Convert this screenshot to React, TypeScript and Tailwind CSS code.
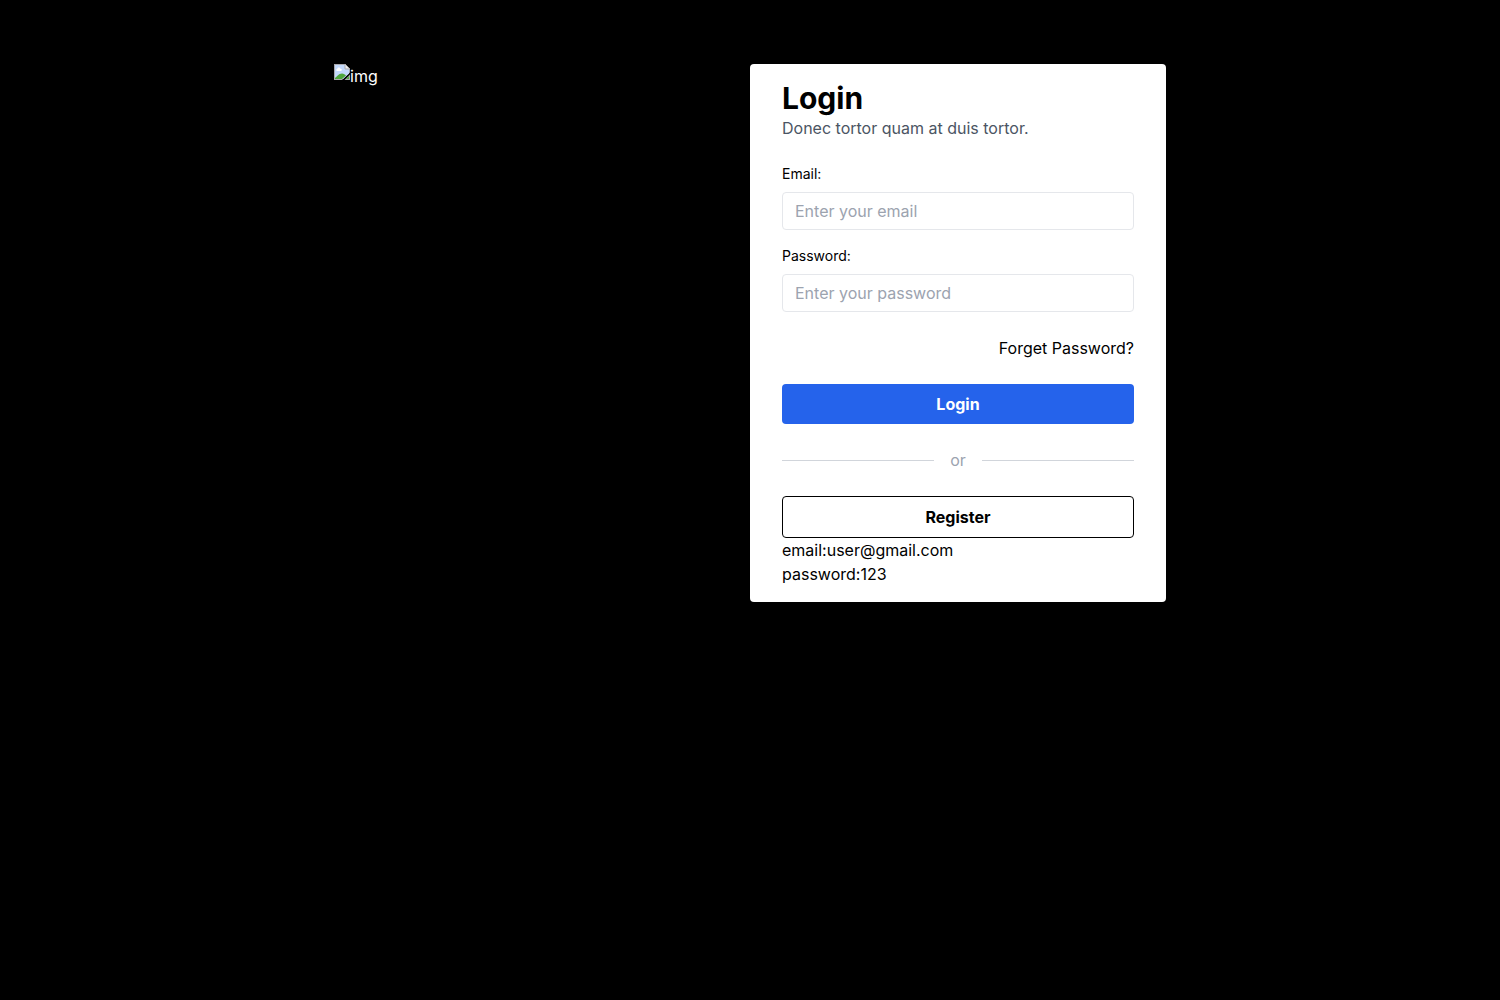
export default function App() {
  return (
    <div className="min-h-screen bg-black font-['Inter',sans-serif] text-base text-black">
      <main className="mx-auto grid max-w-[832px] items-start py-16 sm:grid-cols-2">
        <div className="flex items-start text-white">
          <svg role="img" aria-label="Missing image" width="16" height="16" viewBox="0 0 16 16" className="shrink-0">
            <path d="M0 0h11l5 5v3.500L8 16H0z" fill="#a9a9ad" />
            <path d="M1 1h10v4h4v4.400L9 15H1z" fill="#c3d9fb" />
            <path d="M3 7C1.800 6.800 1.900 5 3.200 5c.3-1.800 2.800-1.800 3.200-.2C8 4.600 8.300 6.800 7 7z" fill="#fff" />
            <path d="M1 15v-1c1.500-1 3.500-4.500 7-4.500 1.800 0 3 1 4 2L8 15z" fill="#4fa63d" />
            <path d="M11 0l5 5h-5z" fill="#eee" />
            <path d="M11 0v5h5" fill="none" stroke="#a9a9ad" />
            <path d="M16 10.500V16h-5.500z" fill="#a9a9ad" />
            <path d="M15 12v3h-3.200z" fill="#4fa63d" />
          </svg>
          <span>img</span>
        </div>
        <section className="rounded bg-white px-8 py-4">
          <h1 className="text-3xl font-bold">Login</h1>
          <p className="text-[#4b5563]">Donec tortor quam at duis tortor.</p>
          <form className="mt-6" onSubmit={(e) => e.preventDefault()}>
            <label htmlFor="email" className="block text-sm">Email:</label>
            <input id="email" type="email" placeholder="Enter your email" className="mt-2 block w-full rounded border border-[#e5e7eb] px-3 py-1.5 leading-6 placeholder:text-[#9ca3af]" />
            <label htmlFor="password" className="mt-4 block text-sm">Password:</label>
            <input id="password" type="password" placeholder="Enter your password" className="mt-2 block w-full rounded border border-[#e5e7eb] px-3 py-1.5 leading-6 placeholder:text-[#9ca3af]" />
            <div className="mt-6 text-right">
              <a href="#forgot">Forget Password?</a>
            </div>
            <button type="submit" className="mt-6 block w-full rounded bg-[#2563eb] py-2 font-bold text-white">Login</button>
          </form>
          <div className="my-6 flex items-center gap-4 text-[#9ca3af]">
            <span className="h-px flex-1 bg-[#d1d5db]" />
            or
            <span className="h-px flex-1 bg-[#d1d5db]" />
          </div>
          <button type="button" className="block w-full rounded border border-black py-2 font-bold">Register</button>
          <p>email:user@gmail.com</p>
          <p>password:123</p>
        </section>
      </main>
    </div>
  );
}
